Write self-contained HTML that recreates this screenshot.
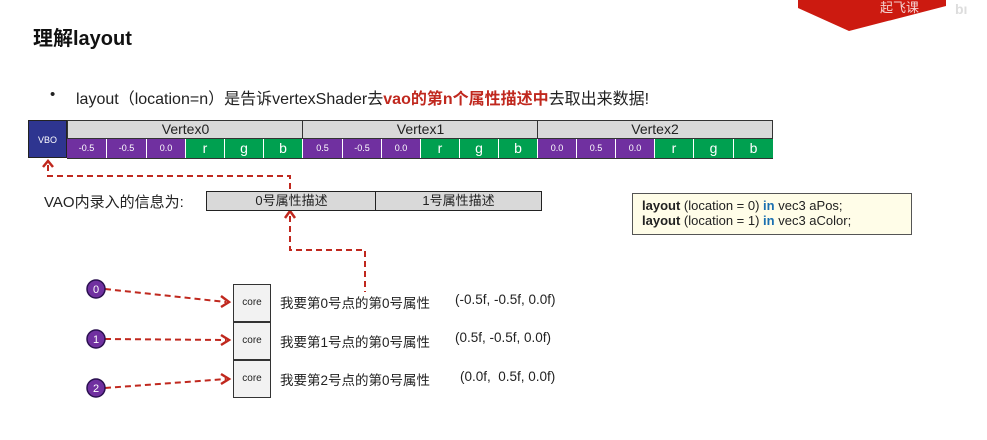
<!DOCTYPE html>
<html><head><meta charset="utf-8"><style>
body{margin:0;width:987px;height:440px;background:#fff;position:relative;overflow:hidden;font-family:"Liberation Sans","Noto Sans CJK SC",sans-serif;color:#222}
.a{position:absolute;white-space:nowrap}
.c{position:absolute;box-sizing:border-box;text-align:center;color:#fff;font-size:9px;line-height:19px;border-right:1px solid #fff}
.p{background:#7030a0}.g{background:#00a050;font-size:14px}
.h{position:absolute;top:120px;height:19px;background:#d9d9d9;border:1.5px solid #333;box-sizing:border-box;text-align:center;font-size:14px;line-height:16px}
.core{position:absolute;left:233px;width:38px;height:38px;border:1.5px solid #333;box-sizing:border-box;background:#f2f2f2;font-size:10px;line-height:36px;text-align:center}
.t{position:absolute;font-size:13.5px;white-space:nowrap}
</style></head><body>
<svg class="a" style="left:0;top:0" width="987" height="440">
<polygon points="798,0 946,0 946,6 849,31 798,8" fill="#cc1a10"/>
<text x="880" y="12" fill="#fff" font-size="13" opacity=".8" font-family="Noto Sans CJK SC">起飞课</text>
<text x="955" y="14" fill="#ddd" font-size="14" font-weight="bold">bı</text>
<g stroke="#c0281e" stroke-width="2" stroke-dasharray="6,4" fill="none">
<path d="M48,165 V176 H290 V193"/>
<path d="M290,216 V250 H365 V292"/>
<path d="M105,289 L226,302"/>
<path d="M105,339 L226,340"/>
<path d="M105,388 L226,379"/>
</g>
<g stroke="#c0281e" stroke-width="2.5" fill="none">
<path d="M43,167 L48,161 L53,167"/><path d="M285,218 L290,211 L295,218"/>
<path d="M221,296 L229,302 L221,307"/><path d="M221,335 L229,340 L221,345"/><path d="M221,374 L229,379 L221,384"/>
</g>
<g fill="#7030a0" stroke="#2a1050" stroke-width="1.5">
<circle cx="96" cy="289" r="9"/><circle cx="96" cy="339" r="9"/><circle cx="96" cy="388" r="9"/></g>
<g fill="#fff" font-size="11" text-anchor="middle"><text x="96" y="293">0</text><text x="96" y="343">1</text><text x="96" y="392">2</text></g>
</svg>
<div class="a" style="left:33px;top:22px;font-size:20px;font-weight:bold;color:#111">理解layout</div>
<div class="a" style="left:50px;top:86px;font-size:15px">•</div>
<div class="a" style="left:76px;top:85px;font-size:16px">layout（location=n）是告诉vertexShader去<b style="color:#c0281e">vao的第n个属性描述中</b>去取出来数据!</div>
<div class="a" style="left:28px;top:120px;width:39px;height:38px;background:#2e3590;color:#fff;font-size:9px;line-height:38px;text-align:center;border:1px solid #222;box-sizing:border-box">VBO</div>
<div class="h" style="left:67px;width:237px">Vertex0</div>
<div class="h" style="left:302px;width:237px">Vertex1</div>
<div class="h" style="left:537px;width:236px">Vertex2</div>
<div class="a" style="left:67px;top:139px;width:706px;height:19px;border-bottom:1.5px solid #333"></div>
<div class="c p" style="left:67px;top:139px;width:40px">-0.5</div><div class="c p" style="left:107px;top:139px;width:40px">-0.5</div><div class="c p" style="left:147px;top:139px;width:39px">0.0</div><div class="c g" style="left:186px;top:139px;width:39px">r</div><div class="c g" style="left:225px;top:139px;width:39px">g</div><div class="c g" style="left:264px;top:139px;width:39px">b</div>
<div class="c p" style="left:303px;top:139px;width:40px">0.5</div><div class="c p" style="left:343px;top:139px;width:39px">-0.5</div><div class="c p" style="left:382px;top:139px;width:39px">0.0</div><div class="c g" style="left:421px;top:139px;width:39px">r</div><div class="c g" style="left:460px;top:139px;width:39px">g</div><div class="c g" style="left:499px;top:139px;width:39px">b</div>
<div class="c p" style="left:538px;top:139px;width:39px">0.0</div><div class="c p" style="left:577px;top:139px;width:39px">0.5</div><div class="c p" style="left:616px;top:139px;width:39px">0.0</div><div class="c g" style="left:655px;top:139px;width:39px">r</div><div class="c g" style="left:694px;top:139px;width:40px">g</div><div class="c g" style="left:734px;top:139px;width:39px;border:0">b</div>
<div class="a" style="left:44px;top:191px;font-size:15px">VAO内录入的信息为:</div>
<div class="a" style="left:206px;top:191px;width:171px;height:20px;background:#d9d9d9;border:1.5px solid #222;box-sizing:border-box;text-align:center;font-size:13px;line-height:17px">0号属性描述</div>
<div class="a" style="left:375px;top:191px;width:167px;height:20px;background:#d9d9d9;border:1.5px solid #222;box-sizing:border-box;text-align:center;font-size:13px;line-height:17px">1号属性描述</div>
<div class="a" style="left:632px;top:193px;width:280px;height:42px;background:#fffde8;border:1.5px solid #555;box-sizing:border-box;padding:4px 0 0 9px;font-size:13px;line-height:15px"><b>layout</b> (location = 0) <b style="color:#1a6fb0">in</b> vec3 aPos;<br><b>layout</b> (location = 1) <b style="color:#1a6fb0">in</b> vec3 aColor;</div>
<div class="core" style="top:284px">core</div><div class="core" style="top:322px">core</div><div class="core" style="top:360px">core</div>
<div class="t" style="left:280px;top:292px">我要第0号点的第0号属性</div><div class="t" style="left:455px;top:292px">(-0.5f, -0.5f, 0.0f)</div>
<div class="t" style="left:280px;top:331px">我要第1号点的第0号属性</div><div class="t" style="left:455px;top:330px">(0.5f, -0.5f, 0.0f)</div>
<div class="t" style="left:280px;top:369px">我要第2号点的第0号属性</div><div class="t" style="left:460px;top:369px">(0.0f,&nbsp; 0.5f, 0.0f)</div>
</body></html>
